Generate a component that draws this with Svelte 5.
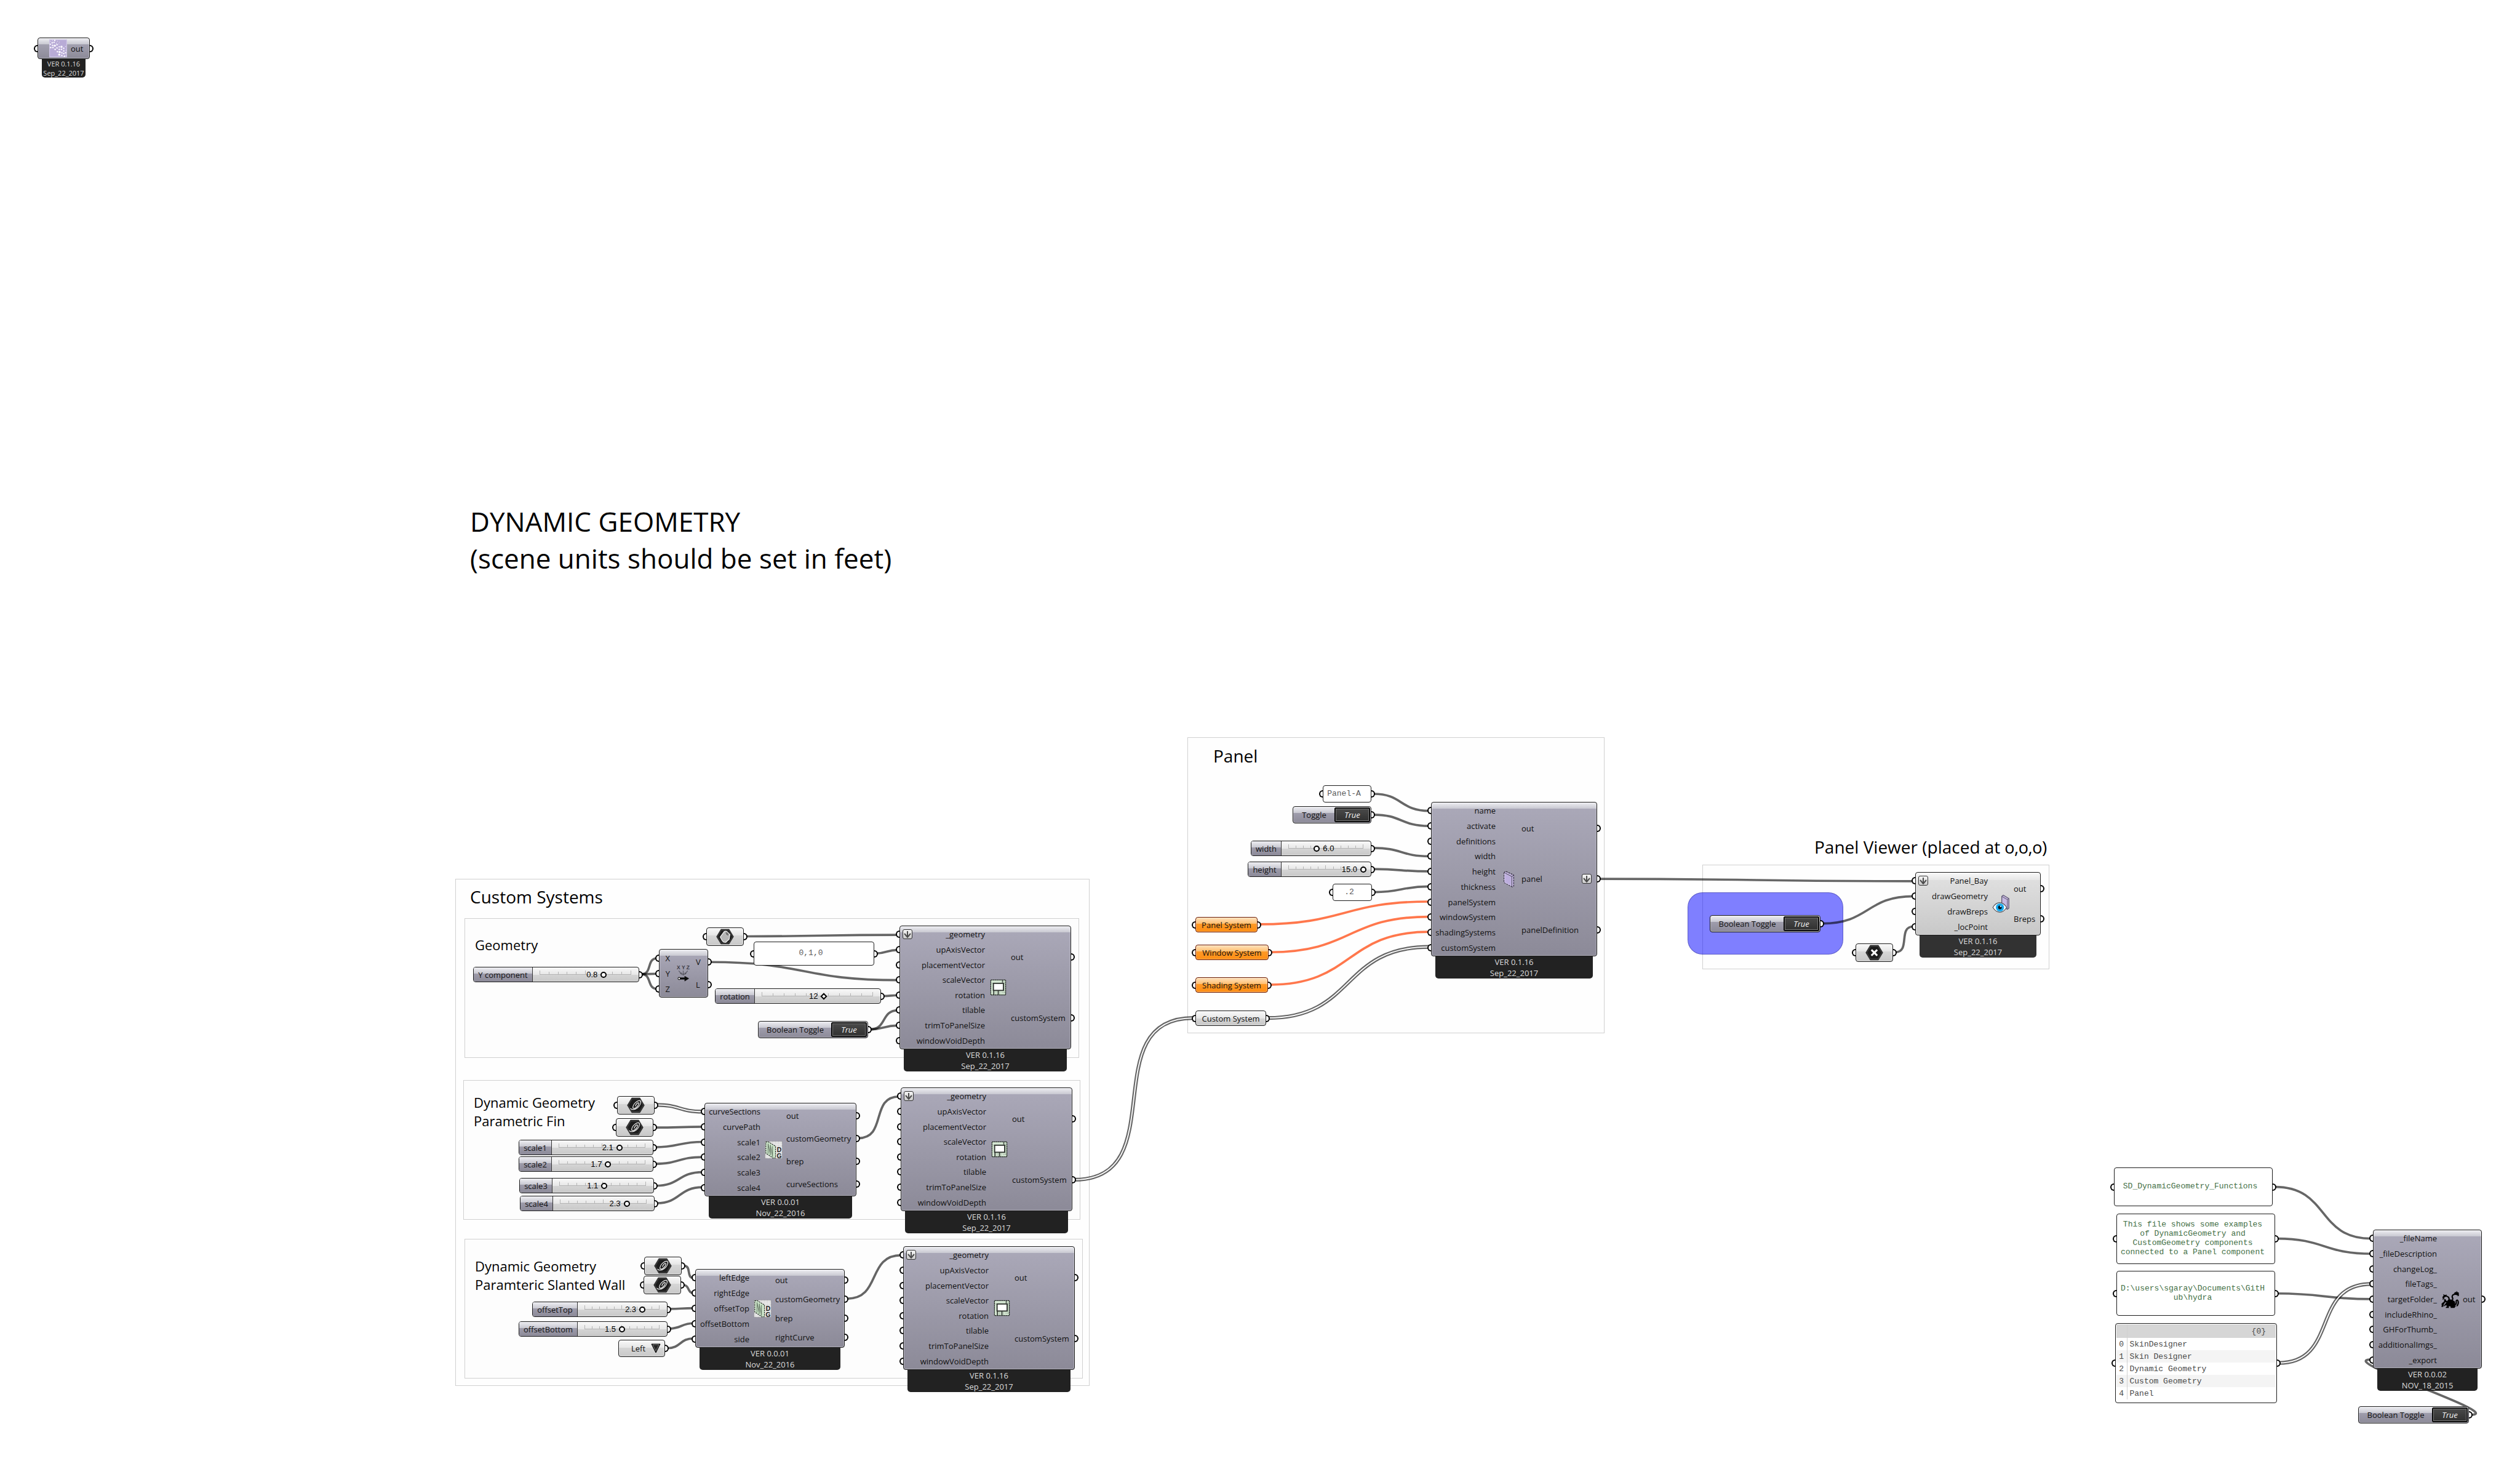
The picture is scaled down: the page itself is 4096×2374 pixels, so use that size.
<script>
  // Document units are scaled by the canvas zoom level.
  const ZOOM = 0.614;
  const px = (n) => `${Math.round(n * ZOOM)}px`;
  const place = (n) => `left:${px(n.x)};top:${px(n.y)}`;
  const box = (n) => `${place(n)};width:${px(n.w)};height:${px(n.h)}`;
  const wide = (n) => `${place(n)};width:${px(n.w)}`;

  const groups = [
    { x: 1206, y: 2325, w: 1679, h: 1342 },
    { x: 1229, y: 2430, w: 1627, h: 370 },
    { x: 1226, y: 2858, w: 1634, h: 370 },
    { x: 1229, y: 3278, w: 1637, h: 370 },
    { x: 3144, y: 1951, w: 1104, h: 784 },
    { x: 4506, y: 2288, w: 918, h: 277 },
    { x: 4467, y: 2362, w: 412, h: 165, kind: 'highlight' },
  ];

  const notes = [
    { x: 1245, y: 1331, size: 'title', lines: ['DYNAMIC GEOMETRY', '(scene units should be set in feet)'] },
    { x: 1245, y: 2344, size: 'heading', lines: ['Custom Systems'] },
    { x: 1257, y: 2475, size: 'caption', lines: ['Geometry'] },
    { x: 1254, y: 2893, size: 'caption', lines: ['Dynamic Geometry', 'Parametric Fin'] },
    { x: 1257, y: 3325, size: 'caption', lines: ['Dynamic Geometry', 'Paramteric Slanted Wall'] },
    { x: 3212, y: 1971, size: 'heading', lines: ['Panel'] },
    { x: 4803, y: 2211, size: 'heading', lines: ['Panel Viewer (placed at 0,0,0)'] },
  ];

  const customIn = ['_geometry', 'upAxisVector', 'placementVector', 'scaleVector', 'rotation', 'tilable', 'trimToPanelSize', 'windowVoidDepth'];
  const customOut = ['out', 'customSystem'];

  const components = [
    { x: 100, y: 100, w: 139, h: 57, col: 18, icon: 'skin', ins: [''], outs: ['out'], tag: ['VER 0.1.16', 'Sep_22_2017'], small: true },
    { x: 1745, y: 2512, w: 130, h: 129, col: 27, icon: 'xyz', ins: ['X', 'Y', 'Z'], outs: ['V', 'L'] },
    { x: 2381, y: 2450, w: 454, h: 328, col: 225, icon: 'frame', ins: customIn, outs: customOut, graft: 'in', tag: ['VER 0.1.16', 'Sep_22_2017'] },
    { x: 2385, y: 2878, w: 454, h: 328, col: 225, icon: 'frame', ins: customIn, outs: customOut, graft: 'in', tag: ['VER 0.1.16', 'Sep_22_2017'] },
    { x: 2391, y: 3298, w: 454, h: 328, col: 225, icon: 'frame', ins: customIn, outs: customOut, graft: 'in', tag: ['VER 0.1.16', 'Sep_22_2017'] },
    { x: 1865, y: 2918, w: 402, h: 248, col: 147, icon: 'dg', ins: ['curveSections', 'curvePath', 'scale1', 'scale2', 'scale3', 'scale4'], outs: ['out', 'customGeometry', 'brep', 'curveSections'], tag: ['VER 0.0.01', 'Nov_22_2016'] },
    { x: 1841, y: 3358, w: 396, h: 208, col: 141, icon: 'dg', ins: ['leftEdge', 'rightEdge', 'offsetTop', 'offsetBottom', 'side'], outs: ['out', 'customGeometry', 'brep', 'rightCurve'], tag: ['VER 0.0.01', 'Nov_22_2016'] },
    { x: 3788, y: 2122, w: 439, h: 408, col: 170, icon: 'slab', ins: ['name', 'activate', 'definitions', 'width', 'height', 'thickness', 'panelSystem', 'windowSystem', 'shadingSystems', 'customSystem'], outs: ['out', 'panel', 'panelDefinition'], graft: 'out', tag: ['VER 0.1.16', 'Sep_22_2017'] },
    { x: 5070, y: 2308, w: 333, h: 168, col: 190, icon: 'eye', kind: 'light', ins: ['Panel_Bay', 'drawGeometry', 'drawBreps', '_locPoint'], outs: ['out', 'Breps'], graft: 'in', tag: ['VER 0.1.16', 'Sep_22_2017'] },
    { x: 6282, y: 3254, w: 289, h: 368, col: 168, icon: 'hydra', ins: ['_fileName', '_fileDescription', 'changeLog_', 'fileTags_', 'targetFolder_', 'includeRhino_', 'GHForThumb_', 'additionalImgs_', '_export'], outs: ['out'], tag: ['VER 0.0.02', 'NOV_18_2015'] },
  ];

  const sliders = [
    { x: 1253, y: 2558, w: 440, h: 41, split: 156, label: 'Y component', value: '0.8', at: 70 },
    { x: 1893, y: 2616, w: 440, h: 41, split: 104, label: 'rotation', value: '12', at: 56, whole: true },
    { x: 1373, y: 3016, w: 356, h: 41, split: 87, label: 'scale1', value: '2.1', at: 70 },
    { x: 1373, y: 3060, w: 356, h: 41, split: 87, label: 'scale2', value: '1.7', at: 57 },
    { x: 1375, y: 3118, w: 356, h: 41, split: 87, label: 'scale3', value: '1.1', at: 52 },
    { x: 1377, y: 3164, w: 356, h: 41, split: 87, label: 'scale4', value: '2.3', at: 77 },
    { x: 1408, y: 3444, w: 359, h: 41, split: 119, label: 'offsetTop', value: '2.3', at: 77 },
    { x: 1373, y: 3496, w: 394, h: 41, split: 154, label: 'offsetBottom', value: '1.5', at: 50 },
    { x: 3311, y: 2224, w: 320, h: 41, split: 80, label: 'width', value: '6.0', at: 38, after: true },
    { x: 3303, y: 2280, w: 328, h: 41, split: 88, label: 'height', value: '15.0', at: 100 },
  ];

  const toggles = [
    { x: 2007, y: 2702, w: 292, h: 45, label: 'Boolean Toggle' },
    { x: 3422, y: 2134, w: 209, h: 45, label: 'Toggle' },
    { x: 4526, y: 2422, w: 293, h: 45, label: 'Boolean Toggle' },
    { x: 6242, y: 3722, w: 293, h: 45, label: 'Boolean Toggle' },
  ];

  const params = [
    { x: 3164, y: 2426, w: 165, h: 41, kind: 'warn', label: 'Panel System' },
    { x: 3164, y: 2500, w: 193, h: 41, kind: 'warn', label: 'Window System' },
    { x: 3164, y: 2586, w: 192, h: 41, kind: 'warn', label: 'Shading System' },
    { x: 3164, y: 2674, w: 187, h: 41, kind: 'light', label: 'Custom System' },
    { x: 1869, y: 2454, w: 100, h: 49, kind: 'light', icon: 'brep' },
    { x: 1633, y: 2900, w: 100, h: 49, kind: 'light', icon: 'curve' },
    { x: 1631, y: 2960, w: 100, h: 49, kind: 'light', icon: 'curve' },
    { x: 1706, y: 3326, w: 100, h: 49, kind: 'light', icon: 'curve' },
    { x: 1704, y: 3376, w: 100, h: 49, kind: 'light', icon: 'curve' },
    { x: 4912, y: 2496, w: 100, h: 49, kind: 'light', icon: 'point' },
  ];

  const panels = [
    { x: 1995, y: 2492, w: 320, h: 63, lines: ['0,1,0'] },
    { x: 3502, y: 2078, w: 129, h: 46, lines: ['Panel-A'] },
    { x: 3528, y: 2338, w: 105, h: 46, lines: ['.2'] },
    { x: 5596, y: 3090, w: 421, h: 103, green: true, lines: ['SD_DynamicGeometry_Functions'] },
    { x: 5602, y: 3212, w: 421, h: 133, green: true, lines: ['This file shows some examples', 'of DynamicGeometry and', 'CustomGeometry components', 'connected to a Panel component'] },
    { x: 5602, y: 3364, w: 421, h: 119, green: true, lines: ['D:\\users\\sgaray\\Documents\\GitH', 'ub\\hydra'] },
  ];

  const tags = ['SkinDesigner', 'Skin Designer', 'Dynamic Geometry', 'Custom Geometry', 'Panel'];
  const tagTable = { x: 5599, y: 3502, w: 428, h: 211 };
  const sideList = { x: 1637, y: 3546, w: 124, h: 45 };

  const wires = [
    [1693, 2578, 1745, 2536], [1693, 2578, 1745, 2577], [1693, 2578, 1745, 2617],
    [1969, 2478, 2381, 2474], [2315, 2523, 2381, 2514], [1875, 2546, 2381, 2594],
    [2333, 2636, 2381, 2634], [2299, 2724, 2381, 2674], [2299, 2724, 2381, 2714],
    [1733, 2924, 1865, 2942, 'list'], [1731, 2984, 1865, 2982],
    [1729, 3036, 1865, 3022], [1729, 3080, 1865, 3062], [1731, 3138, 1865, 3102], [1733, 3184, 1865, 3142],
    [2267, 3012, 2385, 2902], [2839, 3122, 3164, 2694, 'list'],
    [1806, 3350, 1841, 3382], [1804, 3401, 1841, 3422], [1767, 3464, 1841, 3462],
    [1767, 3516, 1841, 3502], [1761, 3568, 1841, 3542], [2237, 3437, 2391, 3322],
    [3631, 2101, 3788, 2146], [3631, 2156, 3788, 2186], [3631, 2244, 3788, 2266],
    [3631, 2300, 3788, 2306], [3633, 2361, 3788, 2346],
    [3329, 2446, 3788, 2386, 'empty'], [3357, 2520, 3788, 2426, 'empty'], [3356, 2606, 3788, 2466, 'empty'],
    [3351, 2694, 3788, 2506, 'list'], [4227, 2326, 5070, 2332],
    [4819, 2444, 5070, 2372], [5012, 2520, 5070, 2452],
    [6017, 3141, 6282, 3278], [6023, 3278, 6282, 3318], [6023, 3423, 6282, 3438],
    [6027, 3607, 6282, 3398, 'list'], [6535, 3744, 6282, 3598],
  ];

  function curve([x1, y1, x2, y2]) {
    const a = x1 + 5;
    const b = x2 - 5;
    // Wires that run backwards get a tighter loop at each end.
    const reach = Math.hypot(b - a, y2 - y1) / (b < a ? 3 : 2);
    return `M${a} ${y1}C${a + reach} ${y1} ${b - reach} ${y2} ${b} ${y2}`;
  }

  const dots = [
    [4, 5, 1], [9, 3, 1], [15, 3, 2], [22, 5, 1], [8, 9, 2], [13, 8, 2], [19, 10, 1], [27, 7, 1], [3, 13, 2], [9, 16, 2],
    [15, 17, 3], [21, 14, 2], [26, 12, 1], [4, 22, 2], [10, 22, 2], [16, 27, 2], [21, 23, 2], [27, 20, 2], [33, 20, 3],
    [39, 24, 2], [44, 19, 1], [27, 27, 2], [33, 27, 2], [22, 33, 2], [28, 34, 3], [34, 36, 2], [39, 31, 2], [45, 29, 1],
    [27, 41, 3], [34, 43, 2], [39, 38, 2], [44, 36, 2], [41, 45, 2], [45, 43, 1],
  ];
  const ticks = Array.from({ length: 11 }, (_, i) => i);
</script>

{#snippet icon(name)}
  {#if name === 'skin'}
    <svg class="icon" viewBox="0 0 48 48" aria-hidden="true">
      <rect x="1" y="1" width="46" height="46" fill="#b8abd6" stroke="#cfc6e6" stroke-width="2" />
      {#each dots as [cx, cy, r]}<circle {cx} {cy} {r} fill="#fbf9ff" />{/each}
    </svg>
  {:else if name === 'xyz'}
    <svg class="icon" viewBox="0 0 48 48" aria-hidden="true">
      <text x="24" y="13" class="xyz">X Y Z</text>
      <path d="M12 17l7 9M24 17v10M36 17l-7 9" stroke="#5c5b66" stroke-width="2" fill="none" />
      <path d="M15 24l6 5-1-7zM21 25h6l-3 6zM33 24l-6 5 1-7z" fill="#55545e" />
      <path d="M14 36h14v-4l11 6-11 7v-5H14z" fill="#0a0a0a" stroke="#0a0a0a" />
      <circle cx="13" cy="38" r="3" fill="#fff" stroke="#222" stroke-width="2" />
    </svg>
  {:else if name === 'frame'}
    <svg class="icon" viewBox="0 0 48 48" aria-hidden="true">
      <rect x="4" y="4" width="40" height="40" fill="#d3e5d1" stroke="#1d241d" stroke-width="2" stroke-dasharray="4 1" />
      <path d="M5 13h38M34 5v8M41 6v34M28 34v9M18 34v9M33 38h10" stroke="#8a9b89" stroke-width="1" />
      <rect x="11" y="13" width="27" height="19" fill="#fff" stroke="#2b302b" stroke-width="3" />
      <path d="M12 33v10M24 33v10" stroke="#39403a" stroke-width="3" />
      <path d="M36 5v6" stroke="#39403a" stroke-width="2" />
    </svg>
  {:else if name === 'dg'}
    <svg class="icon" viewBox="0 0 48 48" aria-hidden="true">
      <rect x="1" y="1" width="46" height="46" fill="#dedede" stroke="#8f8f95" stroke-width="1" />
      <path d="M9 1v46M17 1v46M25 1v46M33 1v46M41 1v46M1 9h46M1 17h46M1 25h46M1 33h46M1 41h46" stroke="#f4f4f4" stroke-width="1" />
      <path d="M3 3l6-1 20 12v31l-5 2L3 33z" fill="#cde6cb" stroke="#262c26" stroke-width="2" stroke-dasharray="4 2" />
      <path d="M9 7l6 29M15 10l6 32M9 7v27M15 11v27M21 14v29" stroke="#6e806d" stroke-width="2" fill="none" />
      <text x="39" y="29" class="dg">D</text>
      <text x="39" y="46" class="dg">G</text>
    </svg>
  {:else if name === 'slab'}
    <svg class="icon" viewBox="0 0 48 48" aria-hidden="true">
      <path d="M11 7l4-4 22 10v30l-4 2-22-12z" fill="#cdbfe8" stroke="#2c2838" stroke-width="2" stroke-dasharray="5 2" />
      <path d="M13 9l18 9v24l-18-9z" fill="#bdaede" stroke="#e3daf5" stroke-width="1" />
      <path d="M14 8l18 9 4-3M32 17v26" stroke="#57506b" stroke-width="2" fill="none" />
    </svg>
  {:else if name === 'eye'}
    <svg class="icon" viewBox="0 0 48 48" aria-hidden="true">
      <path d="M26 4l4-3 15 9v26l-4 3-15-9z" fill="#c8bae2" stroke="#55506a" stroke-width="2" />
      <path d="M26 4l15 9v25M41 13l4-3" stroke="#6e6684" stroke-width="2" fill="none" />
      <path d="M2 34q7-12 18-13 12 1 19 13-7 12-18 13Q9 46 2 34z" fill="#fff" stroke="#55555c" stroke-width="2" />
      <circle cx="21" cy="34" r="11" fill="#18a9ee" />
      <circle cx="21" cy="34" r="5" fill="#07131c" />
      <circle cx="23" cy="31" r="2" fill="#bfe9ff" />
    </svg>
  {:else if name === 'hydra'}
    <svg class="icon" viewBox="0 0 135 135" aria-hidden="true">
      <path d="M40 88q8-24 34-20l26 12q10 14 2 26l8 12-10 14H70l2-10-12-4-4 6 4 8H34l2-8 10-6-12-8-10 10-4-6z" fill="#000" />
      <path d="M82 76q10-14 0-28 2-22 30-20M52 84q14-18 2-34-14-12-34-6M46 86q-22-10-30 14M96 110q20-4 18-22-4-14 8-16 12 10 4 34" stroke="#000" stroke-width="10" fill="none" stroke-linejoin="round" />
      <path d="M96 20l12-10 6 4 2-12 8 12 8 0 2 24-10 6 0-8-12-2zM8 50l10-12-4-10 14 6 14-4-4 14-16 10-2 12-10 4 2-12zM2 100l12-12 12 2-4 12-6 8 4 6-10 8-10-2 4-8z" fill="#000" />
      <path d="M24 62l12 8 6 18-12-6-10 2zM116 108l14-10-2 16-12 8z" fill="#000" />
    </svg>
  {:else}
    <svg class="hex" viewBox="0 0 48 42" aria-hidden="true">
      <path d="M13 1h22l12 20-12 20H13L1 21z" fill="#1c1c1c" stroke="#3a3a3a" stroke-width="1" />
      <path d="M14 4h20l10 17-10 17H14L4 21z" fill="none" stroke="#6a6a6a" stroke-width="1" />
      {#if name === 'brep'}
        <path d="M11 22l11-15q4-2 8 1l7 7-2 13-9 8q-6 1-9-3z" fill="#b5b5b5" stroke="#f2f2f2" stroke-width="2" />
        <path d="M24 8q8-1 11 8-2 5-7 2-4-5-4-10z" fill="#777" stroke="#eee" stroke-width="1" />
      {:else if name === 'curve'}
        <path d="M10 30q8 6 18-2t9-18q-5-4-13 3t-8 15q4 4 10-2t6-11q-2-2-5 1t-4 7" fill="none" stroke="#f0f0f0" stroke-width="2" stroke-linecap="round" />
      {:else}
        <path d="M18 15l12 12M30 15L18 27" stroke="#fff" stroke-width="5" stroke-linecap="square" />
      {/if}
    </svg>
  {/if}
{/snippet}

{#snippet arrow()}
  <svg class="graft" viewBox="0 0 14 14" aria-hidden="true">
    <path d="M7 2v9M2 6l5 6 5-6" fill="none" stroke="#4c4c4c" stroke-width="2" />
  </svg>
{/snippet}

<main class="canvas">
  {#each groups as g}
    <div class="group {g.kind ?? ''}" style={box(g)}></div>
  {/each}

  <svg class="wires" aria-hidden="true">
    <g transform="scale({ZOOM})">
      {#each wires as w}
        <path class="wire {w[4] ?? ''}" d={curve(w)} />
        {#if w[4] === 'list'}<path class="core" d={curve(w)} />{/if}
      {/each}
    </g>
  </svg>

  {#each notes as n}
    <div class="note {n.size}" style={place(n)}>
      {#each n.lines as line}<div>{line}</div>{/each}
    </div>
  {/each}

  {#each components as c}
    <section class="node" style={wide(c)}>
      <div class="body {c.kind ?? 'mauve'}" style="height:{px(c.h)};grid-template-columns:{px(c.col)} 42px 1fr">
        <ul class="ports ins">
          {#each c.ins as name, i}
            <li class="grip-in">
              {#if c.graft === 'in' && i === 0}{@render arrow()}{/if}
              <span>{name}</span>
            </li>
          {/each}
        </ul>
        {@render icon(c.icon)}
        <ul class="ports outs">
          {#each c.outs as name, i}
            <li class="grip-out">
              <span>{name}</span>
              {#if c.graft === 'out' && i === 1}{@render arrow()}{/if}
            </li>
          {/each}
        </ul>
      </div>
      {#if c.tag}
        <div class="tag {c.kind ?? ''}" class:small={c.small}>
          {#each c.tag as line}<div>{line}</div>{/each}
        </div>
      {/if}
    </section>
  {/each}

  {#each sliders as s, i}
    <div class="slider shell light grip-out" style={box(s)}>
      <label class="mauve" for="slider-{i}" style="width:{px(s.split)}">{s.label}</label>
      <div class="track">
        <div class="ticks">
          {#each ticks as t}<i class:tall={t % 5 === 0}></i>{/each}
        </div>
        <input id="slider-{i}" class:whole={s.whole} type="range" min="0" max="100" value={s.at} />
        {#if s.after}
          <output for="slider-{i}" style="left:{s.at}%">{s.value}</output>
        {:else}
          <output for="slider-{i}" style="right:{100 - s.at}%">{s.value}</output>
        {/if}
      </div>
    </div>
  {/each}

  {#each toggles as t, i}
    <div class="toggle shell mauve grip-out" style={box(t)}>
      <span id="toggle-{i}">{t.label}</span>
      <button type="button" aria-pressed="true" aria-describedby="toggle-{i}">True</button>
    </div>
  {/each}

  {#each params as p}
    <div class="param shell {p.kind} grip-in grip-out" style={box(p)}>
      {#if p.icon}{@render icon(p.icon)}{:else}<span>{p.label}</span>{/if}
    </div>
  {/each}

  <div class="choice shell light grip-out" style={box(sideList)}>
    <select aria-label="side">
      <option>Left</option>
      <option>Right</option>
    </select>
    <svg viewBox="0 0 16 16" aria-hidden="true">
      <path d="M1 1h14L8 15z" fill="#222" stroke="#000" stroke-width="1" />
      <path d="M3 2h10L8 12z" fill="none" stroke="#777" stroke-width="1" />
    </svg>
  </div>

  {#each panels as p}
    <div class="panel shell grip-in grip-out" class:green={p.green} style={box(p)}>
      <p>{#each p.lines as line}<span>{line}</span>{/each}</p>
    </div>
  {/each}

  <div class="panel list shell grip-in grip-out" style={box(tagTable)}>
    <table>
      <thead>
        <tr><th></th><th>{'{0}'}</th></tr>
      </thead>
      <tbody>
        {#each tags as name, i}
          <tr><td>{i}</td><td>{name}</td></tr>
        {/each}
      </tbody>
    </table>
  </div>
</main>

<style>
  :global(body) {
    background: #fff;
  }

  :global(*),
  :global(*::before),
  :global(*::after) {
    box-sizing: border-box;
  }

  .canvas {
    position: relative;
    width: 100%;
    min-height: 100vh;
    overflow: hidden;
    font: 13px/18px 'Open Sans', 'Noto Sans', sans-serif;
    color: #111;
  }

  .group {
    position: absolute;
    border: 1px solid #d0d0d0;
    background: rgba(250, 250, 250, 0.1);
  }

  .group.highlight {
    border-color: rgba(40, 40, 120, 0.4);
    border-radius: 24px;
    background: rgba(0, 0, 255, 0.5);
  }

  .wires {
    position: absolute;
    inset: 0;
    width: 100%;
    height: 100%;
  }

  .wire {
    fill: none;
    stroke: rgba(0, 0, 0, 0.6);
    stroke-width: 6px;
  }

  .wire.empty {
    stroke: #ff774c;
  }

  .wire.list {
    stroke-width: 10px;
  }

  .core {
    fill: none;
    stroke: #fff;
    stroke-width: 3px;
  }

  .note {
    position: absolute;
    color: #000;
    white-space: nowrap;
    font-variant-numeric: oldstyle-nums;
  }

  .title {
    font-size: 44px;
    line-height: 60px;
  }

  .heading {
    font-size: 28px;
    line-height: 36px;
  }

  .caption {
    font-size: 22px;
    line-height: 30px;
  }

  .node {
    position: absolute;
  }

  .body,
  .shell {
    border: 1px solid #1c1c1c;
    border-radius: 4px;
    box-shadow: inset 0 0 0 1px rgba(255, 255, 255, 0.3);
  }

  .mauve {
    background:
      linear-gradient(#eeeef2, #c8c8d1) top / 100% 10px no-repeat,
      linear-gradient(#aba9b9, #8c8a98);
  }

  .light {
    background:
      linear-gradient(#f9f9f9, #e6e6e6) top / 100% 12px no-repeat,
      linear-gradient(#e2e2e2, #c8c8c8);
  }

  .warn {
    border-color: #6b1a00;
    background:
      linear-gradient(#ffe2bd, #ffbf70) top / 100% 10px no-repeat,
      linear-gradient(#ffa235, #ff8e14);
  }

  .body {
    display: grid;
    align-items: center;
    padding: 1px 0;
  }

  .ports {
    display: flex;
    flex-direction: column;
    height: 100%;
    margin: 0;
    padding: 0;
    list-style: none;
  }

  .ports li {
    flex: 1;
    display: flex;
    align-items: center;
    white-space: nowrap;
  }

  .ins li {
    justify-content: flex-end;
  }

  .outs li {
    justify-content: space-between;
  }

  .grip-in,
  .grip-out {
    position: relative;
  }

  .grip-in::before,
  .grip-out::after {
    content: '';
    position: absolute;
    top: 50%;
    width: 6px;
    height: 12px;
    margin-top: -6px;
    border: 2px solid #000;
    background: #fff;
  }

  .grip-in::before {
    right: 100%;
    margin-right: 1px;
    border-right: 0;
    border-radius: 6px 0 0 6px;
  }

  .grip-out::after {
    left: 100%;
    margin-left: 1px;
    border-left: 0;
    border-radius: 0 6px 6px 0;
  }

  .graft {
    flex: none;
    width: 16px;
    height: 16px;
    border: 1px solid #333;
    border-radius: 3px;
    background: linear-gradient(#f6f6f6, #c9c9c9);
  }

  .ins .graft {
    margin: 0 auto 0 4px;
  }

  .outs .graft {
    margin-right: 8px;
  }

  .icon {
    width: 29px;
    height: 29px;
    justify-self: center;
  }

  .hex {
    width: 29px;
    height: 26px;
  }

  .xyz {
    font: bold 14px 'Liberation Sans', sans-serif;
    text-anchor: middle;
    fill: #3c3b46;
  }

  .dg {
    font: bold 17px 'Liberation Sans', sans-serif;
    text-anchor: middle;
    fill: #1a1a1a;
  }

  .tag {
    margin: 0 7px;
    border-radius: 0 0 5px 5px;
    background: #222;
    color: #dcdcdc;
    text-align: center;
  }

  .tag.light {
    background: #323232;
  }

  .tag.small {
    font-size: 11px;
    line-height: 15px;
  }

  .shell {
    position: absolute;
    display: flex;
    align-items: center;
  }

  .slider label {
    display: flex;
    flex: none;
    align-items: center;
    justify-content: center;
    height: 100%;
    border-right: 1px solid #333;
    border-radius: 3px 0 0 3px;
    white-space: nowrap;
  }

  .track {
    position: relative;
    flex: 1;
    height: 100%;
    margin: 0 12px 0 11px;
  }

  .ticks {
    display: flex;
    justify-content: space-between;
    align-items: flex-end;
    height: 50%;
    border-bottom: 1px solid #b4b4b4;
  }

  .ticks i {
    width: 1px;
    height: 4px;
    background: #b4b4b4;
  }

  .ticks .tall {
    height: 6px;
  }

  .track input {
    position: absolute;
    inset: 0 -5px;
    width: calc(100% + 10px);
    height: 100%;
    margin: 0;
    appearance: none;
    background: none;
  }

  .track input::-webkit-slider-thumb {
    appearance: none;
    box-sizing: border-box;
    width: 10px;
    height: 10px;
    border: 2px solid #000;
    border-radius: 50%;
    background: #fff;
  }

  .track .whole::-webkit-slider-thumb {
    width: 8px;
    height: 8px;
    border-radius: 0;
    transform: rotate(45deg);
  }

  .track output {
    position: absolute;
    top: 50%;
    margin: -9px 10px 0;
    font-family: 'Liberation Sans', sans-serif;
    color: #000;
    pointer-events: none;
  }

  .toggle {
    justify-content: space-between;
    padding: 1px;
  }

  .toggle span {
    flex: 1;
    text-align: center;
    white-space: nowrap;
  }

  .toggle button {
    width: 58px;
    height: 100%;
    padding: 0;
    border: 1px solid #000;
    border-radius: 2px;
    background: linear-gradient(#4b4b4b, #2f2f2f);
    box-shadow: inset 0 0 0 1px #111, inset 0 0 0 2px #777;
    color: #f2f2f2;
    font: italic 13px/18px 'Open Sans', 'Noto Sans', sans-serif;
  }

  .param {
    justify-content: center;
    white-space: nowrap;
  }

  .shell.grip-in,
  .shell.grip-out {
    position: absolute;
  }

  .choice select {
    width: 100%;
    height: 100%;
    padding: 0 0 0 20px;
    border: 0;
    appearance: none;
    background: none;
    color: #111;
    font: inherit;
  }

  .choice svg {
    position: absolute;
    right: 6px;
    width: 16px;
    height: 16px;
    pointer-events: none;
  }

  .panel {
    justify-content: center;
    background: #fff;
    box-shadow: none;
    color: #5a5a5a;
    font: 13px/15px 'Liberation Mono', monospace;
  }

  .panel p {
    margin: 0 10px 2px 0;
    text-align: center;
    white-space: pre;
  }

  .panel p span {
    display: block;
  }

  .panel.green {
    color: #447046;
  }

  .panel.list {
    align-items: flex-start;
    padding: 1px;
    color: #4a4a4a;
  }

  table {
    width: 100%;
    border-collapse: collapse;
  }

  th,
  td {
    height: 20px;
    padding: 0 0 0 4px;
    font-weight: normal;
    text-align: left;
  }

  th {
    height: 22px;
    background: #d6d6d6;
  }

  th:last-child {
    padding-right: 16px;
    text-align: right;
  }

  th:first-child,
  td:first-child {
    width: 17px;
    padding: 0;
    border-right: 1px solid #d0d0d0;
    text-align: center;
  }

  tbody tr:nth-child(even) {
    background: #f4f4f4;
  }
</style>
